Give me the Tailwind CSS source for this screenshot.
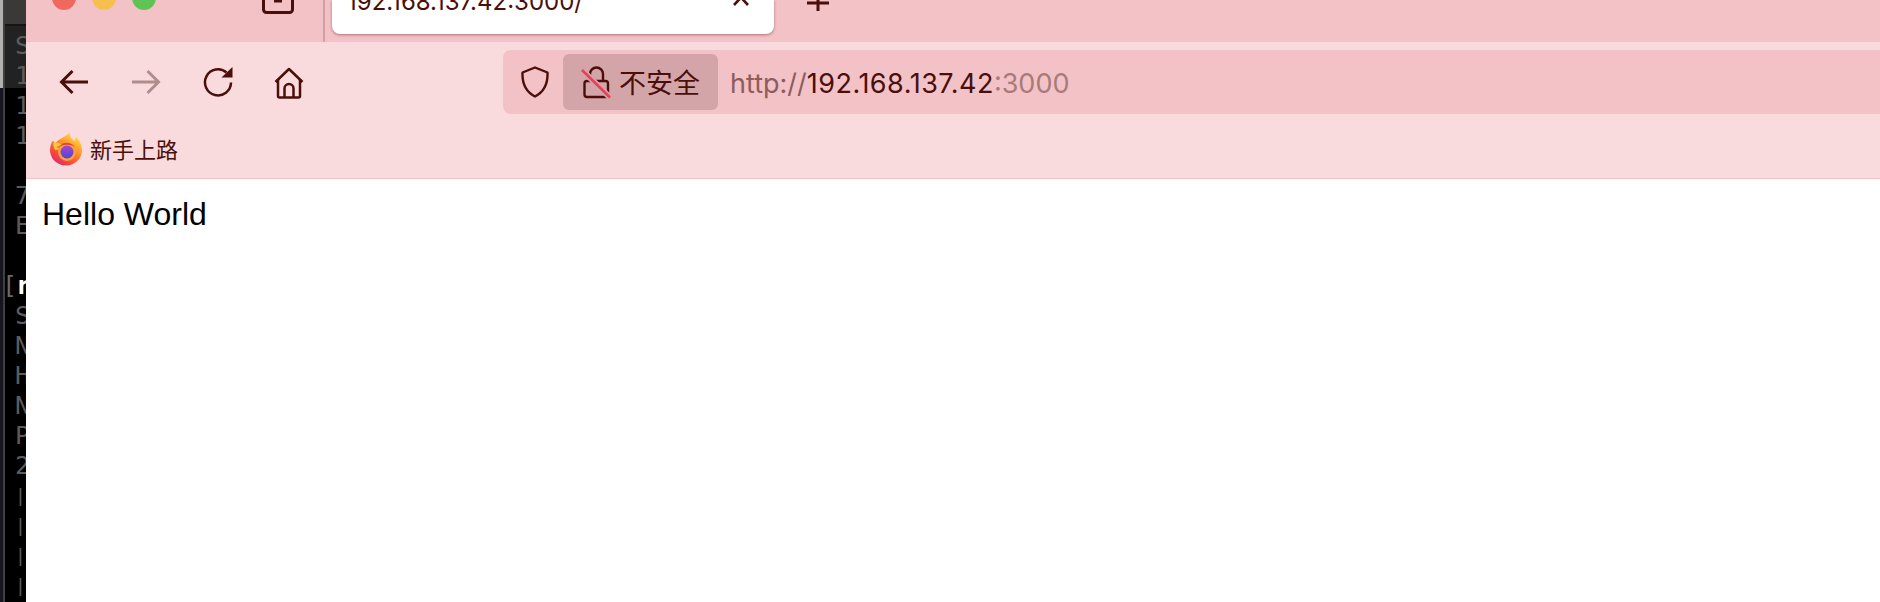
<!DOCTYPE html>
<html lang="zh">
<head>
<meta charset="utf-8">
<script src="https://cdn.jsdelivr.net/npm/@tailwindcss/browser@4"></script>
</head>
<body class="bg-white">
<div class="flex h-[602px] w-[1880px] overflow-hidden">
  <!-- terminal behind -->
  <div class="relative h-full w-[26px] shrink-0 overflow-hidden bg-black font-['DejaVu_Sans_Mono',monospace] text-[25px] leading-[30px] text-[#5c5c5c]">
    <div class="flex h-[88px] flex-col bg-[#222222]">
      <div class="h-[26px] border-b-2 border-[#151515] bg-[#3a3937]"></div>
    </div>
    <div class="absolute inset-y-0 left-0 flex w-[5px]">
      <div class="flex w-[3px] flex-col bg-[#14151f]"><div class="h-[88px] bg-[#b3b0b0]"></div></div>
      <div class="w-[2px] bg-[#3f3f3f]"></div>
    </div>
    <div class="absolute left-[15px] top-[31px] flex w-[40px] flex-col">
      <span>S</span><span>1</span><span>1</span><span>1</span><span>&nbsp;</span><span>7</span><span>E</span><span>&nbsp;</span>
      <span class="-ml-[13px] flex"><span class="w-[14px] text-[#6a6a6a]">[</span><span class="font-bold text-white">r</span></span>
      <span>S</span><span>N</span><span>H</span><span>N</span><span>P</span><span>2</span>
      <span class="text-[18px]">|</span><span class="text-[18px]">|</span><span class="text-[18px]">|</span><span class="text-[18px]">|</span>
    </div>
  </div>

  <div class="flex min-w-0 flex-1 flex-col">
    <!-- tab strip -->
    <div class="flex h-[42px] shrink-0 overflow-hidden bg-[#f3c2c6]">
      <div class="flex h-[10px] gap-[16px] self-start pl-[26px]">
        <div class="-mt-[14px] h-[24px] w-[24px] rounded-full bg-[#f0695f]"></div>
        <div class="-mt-[14px] h-[24px] w-[24px] rounded-full bg-[#f6c04f]"></div>
        <div class="-mt-[14px] h-[24px] w-[24px] rounded-full bg-[#5fc454]"></div>
      </div>
      <div class="ml-[106px] self-start">
        <svg class="block" width="32" height="14" viewBox="0 0 32 14" fill="none" stroke="#4a0f0a" stroke-width="3"><path d="M1.5 -4V9.5a3 3 0 0 0 3 3h23a3 3 0 0 0 3-3V-4"/><path d="M12 1h8"/></svg>
      </div>
      <div class="ml-[29px] h-full w-[2px] bg-[#d39fa3]"></div>
      <div class="ml-[7px] flex h-[34px] w-[442px] items-end justify-between rounded-b-[8px] bg-white pb-[17px] pl-[15px] pr-[22px] shadow-[0_1px_3px_rgba(80,20,20,0.45)]">
        <span class="font-['Inter',sans-serif] text-[24px] leading-[30px] whitespace-nowrap text-[#4a0f0a]">192.168.137.42:3000/</span>
        <svg class="mb-[8px] block" width="20" height="12" viewBox="0 0 20 12" fill="none" stroke="#4a0f0a" stroke-width="2.6"><path d="M2 -7L16 8M16 -7L2 8"/></svg>
      </div>
      <div class="ml-[32px] self-start">
        <svg class="block" width="24" height="12" viewBox="0 0 24 12" fill="none" stroke="#4a0f0a" stroke-width="3"><path d="M12 -6V11M1 3H23"/></svg>
      </div>
    </div>

    <!-- nav toolbar -->
    <div class="flex h-[72px] shrink-0 bg-[#f9dbde] pl-[12px] pt-[8px]">
      <div class="flex h-[64px] w-[288px] shrink-0 items-center">
        <div class="flex w-[72px] justify-center">
          <svg width="32" height="28" viewBox="0 0 32 28" fill="none" stroke="#4a0f0a" stroke-width="3"><path d="M30 14H3.5M14.5 3L3.5 14L14.5 25"/></svg>
        </div>
        <div class="flex w-[72px] justify-center">
          <svg width="32" height="28" viewBox="0 0 32 28" fill="none" stroke="#b08d8d" stroke-width="3"><path d="M2 14H28.500M17.500 3L28.500 14L17.500 25"/></svg>
        </div>
        <div class="flex w-[72px] justify-center">
          <svg width="32" height="32" viewBox="0 0 32 32" fill="none" stroke="#4a0f0a" stroke-width="2.500"><path d="M29 16.500A13 13 0 1 1 24.500 6.500"/><path d="M19.500 11.500H30.500V1Z" fill="#4a0f0a" stroke="none"/></svg>
        </div>
        <div class="flex w-[72px] justify-center">
          <svg class="mt-[2px]" width="32" height="32" viewBox="0 0 32 32" fill="none" stroke="#4a0f0a" stroke-width="2.500" stroke-linejoin="round"><path d="M1.500 15L15 2L28.500 15"/><path d="M4 12V29a1.500 1.500 0 0 0 1.500 1.500H24.500A1.500 1.500 0 0 0 26 29V12"/><path d="M10.500 30V21.500a4.500 4.500 0 0 1 9 0V30"/></svg>
        </div>
      </div>
      <div class="ml-[177px] flex h-[64px] flex-1 items-center rounded-l-[8px] bg-[#f3c2c6] pl-[18px]">
        <svg class="shrink-0" width="28" height="32" viewBox="0 0 28 32" fill="none" stroke="#4a0f0a" stroke-width="2.400" stroke-linejoin="round"><path d="M14 1.500L26.500 6.500C27 18 23 26 14 30.500C5 26 1 18 1.500 6.500Z"/></svg>
        <div class="ml-[14px] flex h-[56px] w-[155px] shrink-0 items-center rounded-[6px] bg-[#d3a5a8] pl-[18px]">
          <svg class="shrink-0" width="30" height="34" viewBox="0 0 30 34" fill="none"><path d="M3.500 18.500a2.500 2.500 0 0 1 2.500-2.500H24.500a2.500 2.500 0 0 1 2.500 2.500V29.500a2.500 2.500 0 0 1-2.500 2.500H6a2.500 2.500 0 0 1-2.500-2.500Z" stroke="#4a0f0a" stroke-width="2.400"/><path d="M9 16V9a6.500 6.500 0 0 1 13 0V16" stroke="#4a0f0a" stroke-width="2.400"/><path d="M1 5L29 32.500" stroke="#d3a5a8" stroke-width="6"/><path d="M1 5L29 32.500" stroke="#e8405a" stroke-width="2.600"/></svg>
          <span class="mb-[2px] ml-[8px] font-['Noto_Sans_CJK_SC',sans-serif] text-[27px] leading-none whitespace-nowrap text-[#4a0f0a]">不安全</span>
        </div>
        <div class="ml-[12px] mt-[2px] font-['Inter',sans-serif] text-[27px] leading-none whitespace-nowrap text-[#8d5c5c]">http://<span class="tracking-[0.5px] text-[#4a0f0a]">192.168.137.42</span><span class="text-[#a87a7a]">:3000</span></div>
      </div>
    </div>

    <!-- bookmarks -->
    <div class="flex h-[65px] shrink-0 items-center border-b border-[#f6c0c5] bg-[#f9dbde] pl-[24px] pt-[4px]">
      <svg width="32" height="34" viewBox="0 0 32 34" class="mt-[2px] shrink-0">
        <defs>
          <linearGradient id="fx" x1="0.8" y1="0.1" x2="0.2" y2="1"><stop offset="0" stop-color="#ffd93b"/><stop offset="0.4" stop-color="#ff8a2b"/><stop offset="0.75" stop-color="#f5443f"/><stop offset="1" stop-color="#d6257e"/></linearGradient>
          <linearGradient id="fy" x1="0.5" y1="0" x2="0.5" y2="1"><stop offset="0" stop-color="#a745ce"/><stop offset="1" stop-color="#4f46d0"/></linearGradient>
        </defs>
        <path d="M20 0.500C19 4 21 6 24 9C26 7.500 26 6 26 5C29 8 32 13 32 18C32 26.500 25 33.500 16 33.500C7 33.500 0 26.500 0 18C0 14.500 1 11 3 8.500L5 12C8 7 14 6 20 0.500Z" fill="url(#fx)"/>
        <path d="M3 11C7 10 10 11 12 13L6 15L11 17L5 18C4 15 3 13 3 11Z" fill="#ffc53d"/>
        <circle cx="17" cy="20" r="9" fill="#f9a13a"/>
        <circle cx="17" cy="20" r="6.500" fill="url(#fy)"/>
        <path d="M9 15C12 10 20 9 25 15C20 12 14 12 9 15Z" fill="#e0482f"/>
      </svg>
      <span class="ml-[8px] font-['Noto_Sans_CJK_SC',sans-serif] text-[22px] leading-none whitespace-nowrap text-[#4a0f0a]">新手上路</span>
    </div>

    <!-- page -->
    <div class="flex-1 bg-white px-[16px] pt-[17px] font-['Liberation_Sans',sans-serif] text-[32px] leading-[37px] text-black">Hello World</div>
  </div>
</div>
</body>
</html>
